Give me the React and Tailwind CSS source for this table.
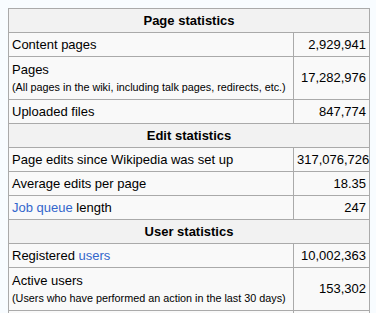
const link = "text-[#3366cc]";

function Header({ children }) {
  return (
    <tr>
      <th
        colSpan={2}
        className="h-[24px] border border-[#aaaaaa] bg-[#f2f2f2] px-[3px] text-center font-bold"
      >
        {children}
      </th>
    </tr>
  );
}

function Row({ label, note, value }) {
  return (
    <tr>
      <td
        className={`border border-[#aaaaaa] px-[3px] align-middle ${note ? "h-[43px]" : "h-[24px]"}`}
      >
        <div>{label}</div>
        {note && (
          <div className="mt-[3px] whitespace-nowrap text-[10.8px] leading-[13px]">{note}</div>
        )}
      </td>
      <td className="border border-[#aaaaaa] px-[3px] text-right align-middle">{value}</td>
    </tr>
  );
}

export default function App() {
  return (
    <div className="min-h-screen bg-[#f8fcff] p-2 font-['Liberation_Sans',Arial,sans-serif] text-[13px] leading-[16px] text-black">
      <table className="w-[362px] table-fixed border-collapse border border-[#aaaaaa] bg-[#f9f9f9]">
        <colgroup>
          <col className="w-[285px]" />
          <col />
        </colgroup>
        <tbody>
          <Header>Page statistics</Header>
          <Row label="Content pages" value="2,929,941" />
          <Row
            label="Pages"
            note="(All pages in the wiki, including talk pages, redirects, etc.)"
            value="17,282,976"
          />
          <Row label="Uploaded files" value="847,774" />
          <Header>Edit statistics</Header>
          <Row label="Page edits since Wikipedia was set up" value="317,076,726" />
          <Row label="Average edits per page" value="18.35" />
          <Row
            label={
              <>
                <a href="#" className={link}>Job queue</a> length
              </>
            }
            value="247"
          />
          <Header>User statistics</Header>
          <Row
            label={
              <>
                Registered <a href="#" className={link}>users</a>
              </>
            }
            value="10,002,363"
          />
          <Row
            label="Active users"
            note="(Users who have performed an action in the last 30 days)"
            value="153,302"
          />
          <tr>
            <td className="h-[24px] border border-[#aaaaaa]"></td>
            <td className="border border-[#aaaaaa]"></td>
          </tr>
        </tbody>
      </table>
    </div>
  );
}
